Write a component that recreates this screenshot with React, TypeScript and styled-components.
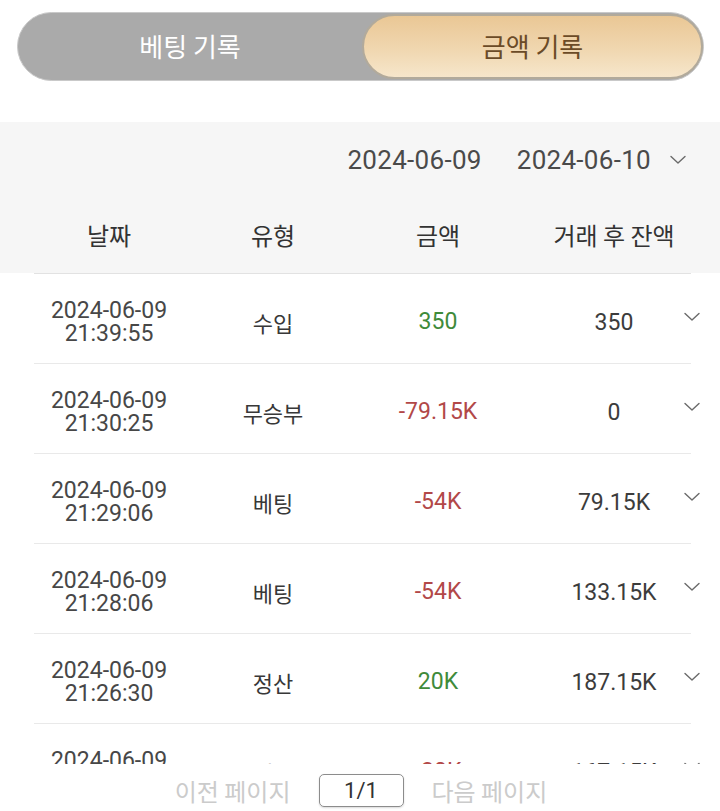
import React from 'react'
import styled, { createGlobalStyle } from 'styled-components'

type Entry = {
    date: string
    time: string
    kind: string
    amount: string
    balance: string
}

const entries: Entry[] = [
    { date: '2024-06-09', time: '21:39:55', kind: '수입', amount: '350', balance: '350' },
    { date: '2024-06-09', time: '21:30:25', kind: '무승부', amount: '-79.15K', balance: '0' },
    { date: '2024-06-09', time: '21:29:06', kind: '베팅', amount: '-54K', balance: '79.15K' },
    { date: '2024-06-09', time: '21:28:06', kind: '베팅', amount: '-54K', balance: '133.15K' },
    { date: '2024-06-09', time: '21:26:30', kind: '정산', amount: '20K', balance: '187.15K' },
    { date: '2024-06-09', time: '21:25:10', kind: '베팅', amount: '-20K', balance: '167.15K' },
]

const Chevron = ({ size = 16 }: { size?: number }) => (
    <svg width={size} height={size / 2 + 2} viewBox="0 0 16 10" fill="none">
        <path d="M1 1.5 L8 8 L15 1.5" stroke="#6a6a6a" strokeWidth="1.4" strokeLinecap="round" strokeLinejoin="round" />
    </svg>
)

export default function App() {
    return (
        <>
            <GlobalStyle />
            <Page>
                <Toggle>
                    <TabButton>베팅 기록</TabButton>
                    <TabButton $active>금액 기록</TabButton>
                </Toggle>

                <FilterPanel>
                    <DateRange>
                        <DateText>2024-06-09</DateText>
                        <DateText>2024-06-10</DateText>
                        <Chevron />
                    </DateRange>
                    <HeaderRow>
                        <HeadCell>날짜</HeadCell>
                        <HeadCell>유형</HeadCell>
                        <HeadCell>금액</HeadCell>
                        <span />
                        <HeadCell>거래 후 잔액</HeadCell>
                    </HeaderRow>
                </FilterPanel>

                <ListViewport>
                    {entries.map((e, i) => (
                        <Row key={i}>
                            <DateCell>
                                <span>{e.date}</span>
                                <span>{e.time}</span>
                            </DateCell>
                            <KindCell>{e.kind}</KindCell>
                            <AmountCell $negative={e.amount.startsWith('-')}>{e.amount}</AmountCell>
                            <span />
                            <BalanceCell>{e.balance}</BalanceCell>
                            <ExpandCell>
                                <Chevron />
                            </ExpandCell>
                        </Row>
                    ))}
                </ListViewport>

                <Pager>
                    <PagerLink>이전 페이지</PagerLink>
                    <PageBox>1/1</PageBox>
                    <PagerLink>다음 페이지</PagerLink>
                </Pager>
            </Page>
        </>
    )
}

const GlobalStyle = createGlobalStyle`
    html, body {
        margin: 0;
        padding: 0;
        background: #ffffff;
    }
    body {
        font-family: Roboto, "Noto Sans CJK KR", sans-serif;
        color: #3c3c3c;
    }
`

const columns = '150px 178px 152px 30px 140px 1fr'

const Page = styled.div`
    width: 720px;
    height: 811px;
    overflow: hidden;
    display: flex;
    flex-direction: column;
`

const Toggle = styled.div`
    margin: 12px 16px 0 17px;
    height: 69px;
    box-sizing: border-box;
    border: 1px solid #c9c9c9;
    border-radius: 35px;
    background: #aaaaaa;
    display: grid;
    grid-template-columns: 1fr 341px;
    padding: 1px 0 1px 0;
`

const TabButton = styled.div<{ $active?: boolean }>`
    display: flex;
    align-items: center;
    justify-content: center;
    font-family: "Noto Sans CJK KR", sans-serif;
    font-size: 26px;
    border-radius: 33px;
    box-sizing: border-box;
    color: ${(p) => (p.$active ? '#6b4b27' : '#ffffff')};
    background: ${(p) => (p.$active ? 'linear-gradient(180deg, #eac795 0%, #f0d7b0 55%, #f6e6cb 100%)' : 'transparent')};
    border: ${(p) => (p.$active ? '2px solid #b2aa9b' : 'none')};
    padding-bottom: 2px;
`

const FilterPanel = styled.div`
    margin-top: 41px;
    height: 151px;
    background: #f6f6f6;
    display: flex;
    flex-direction: column;
`

const DateRange = styled.div`
    height: 76px;
    display: flex;
    align-items: center;
    justify-content: flex-end;
    padding-right: 34px;
    gap: 19px;
`

const DateText = styled.span`
    font-size: 26px;
    color: #4a4a4a;
    letter-spacing: 0.3px;
    & + & {
        margin-left: 16px;
    }
`

const HeaderRow = styled.div`
    flex: 1;
    margin-left: 34px;
    display: grid;
    grid-template-columns: ${columns};
    align-items: center;
    padding-bottom: 2px;
`

const HeadCell = styled.span`
    font-family: "Noto Sans CJK KR", sans-serif;
    font-size: 24px;
    color: #333333;
    text-align: center;
    white-space: nowrap;
`

const ListViewport = styled.div`
    height: 491px;
    overflow: hidden;
    flex-shrink: 0;
`

const Row = styled.div`
    margin: 0 29px 0 34px;
    height: 90px;
    box-sizing: border-box;
    border-top: 1px solid #e9e9e9;
    display: grid;
    grid-template-columns: ${columns};
    align-items: center;
    font-size: 23px;
    &:first-child {
        border-top-color: #e2e2e2;
    }
`

const DateCell = styled.div`
    display: flex;
    flex-direction: column;
    align-items: center;
    line-height: 23px;
    color: #474747;
    padding-top: 7px;
`

const KindCell = styled.span`
    font-family: "Noto Sans CJK KR", sans-serif;
    font-size: 22px;
    color: #383838;
    text-align: center;
    padding-top: 6px;
`

const AmountCell = styled.span<{ $negative: boolean }>`
    text-align: center;
    color: ${(p) => (p.$negative ? '#b24848' : '#3f8b3a')};
    padding-top: 5px;
`

const BalanceCell = styled.span`
    text-align: center;
    color: #3c3c3c;
    padding-top: 7px;
`

const ExpandCell = styled.span`
    display: flex;
    width: 16px;
    padding-bottom: 4px;
`

const Pager = styled.div`
    display: flex;
    justify-content: center;
    align-items: center;
    gap: 28px;
    padding-top: 9px;
    padding-left: 2px;
`

const PagerLink = styled.span`
    font-family: "Noto Sans CJK KR", sans-serif;
    font-size: 24px;
    color: #cbcbcb;
`

const PageBox = styled.span`
    width: 85px;
    height: 33px;
    box-sizing: border-box;
    border: 1px solid #8c8c8c;
    border-radius: 5px;
    box-shadow: 0 1px 2px rgba(0, 0, 0, 0.15);
    display: flex;
    align-items: center;
    justify-content: center;
    font-size: 22px;
    color: #333333;
`
